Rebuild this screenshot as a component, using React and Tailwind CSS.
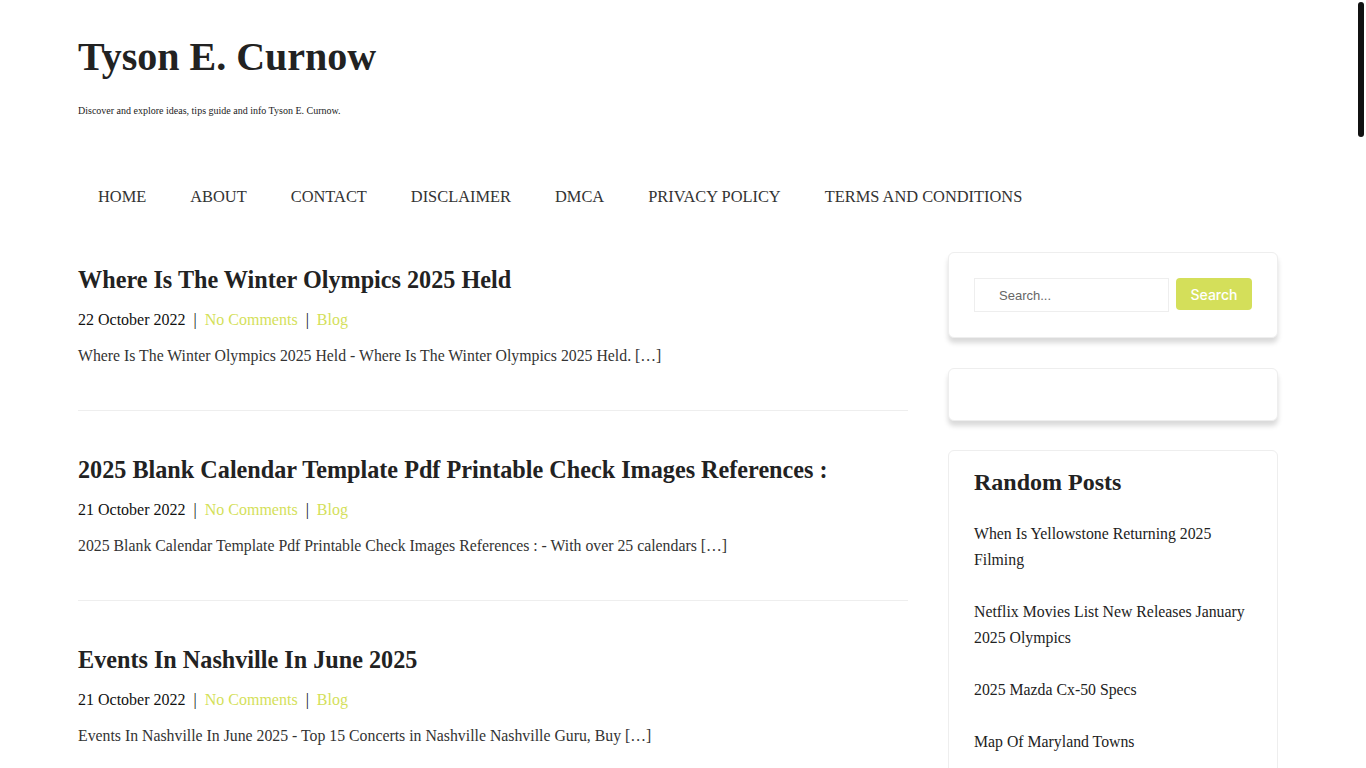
import React from "react";

const navItems = [
  "HOME",
  "ABOUT",
  "CONTACT",
  "DISCLAIMER",
  "DMCA",
  "PRIVACY POLICY",
  "TERMS AND CONDITIONS",
];

const posts = [
  {
    title: "Where Is The Winter Olympics 2025 Held",
    date: "22 October 2022",
    excerpt:
      "Where Is The Winter Olympics 2025 Held - Where Is The Winter Olympics 2025 Held. […]",
  },
  {
    title: "2025 Blank Calendar Template Pdf Printable Check Images References :",
    date: "21 October 2022",
    excerpt:
      "2025 Blank Calendar Template Pdf Printable Check Images References : - With over 25 calendars […]",
  },
  {
    title: "Events In Nashville In June 2025",
    date: "21 October 2022",
    excerpt:
      "Events In Nashville In June 2025 - Top 15 Concerts in Nashville Nashville Guru, Buy […]",
  },
];

const randomPosts = [
  "When Is Yellowstone Returning 2025 Filming",
  "Netflix Movies List New Releases January 2025 Olympics",
  "2025 Mazda Cx-50 Specs",
  "Map Of Maryland Towns",
];

const App = () => {
  return (
    <div className="relative h-screen overflow-hidden bg-white font-['Liberation_Serif',serif] text-[#333]">
      <div className="w-[calc(100%-10px)]">
        <div className="mx-auto w-[1200px]">
          <header className="pt-[30px]">
            <h1 className="text-[40px] leading-[54px] font-bold text-[#222]">
              Tyson E. Curnow
            </h1>
            <p className="mt-[19px] text-[10px] leading-[15px] text-[#222]">
              Discover and explore ideas, tips guide and info Tyson E. Curnow.
            </p>
          </header>

          <nav className="mt-[55px] flex gap-[4px]">
            {navItems.map((item) => (
              <a
                key={item}
                className="px-5 py-3 text-[16.4px] leading-6 text-[#333]"
              >
                {item}
              </a>
            ))}
          </nav>

          <div className="mt-[31px] flex gap-10">
            <main className="w-[830px] pt-[13px]">
              {posts.map((post, index) => (
                <article
                  key={index}
                  className={`border-b border-[#eee] pb-[42px] ${
                    index > 0 ? "pt-[44px]" : ""
                  }`}
                >
                  <h2 className="text-[24.2px] leading-[30px] font-bold text-[#222]">
                    {post.title}
                  </h2>
                  <div className="mt-[13px] text-[16px] leading-6 text-[#111]">
                    <span>{post.date}</span>
                    <span className="mx-2">|</span>
                    <a className="text-[#d4df5a]">No Comments</a>
                    <span className="mx-2">|</span>
                    <a className="text-[#d4df5a]">Blog</a>
                  </div>
                  <p className="mt-3 text-[15.8px] leading-6 text-[#333]">
                    {post.excerpt}
                  </p>
                </article>
              ))}
            </main>

            <aside className="w-[330px]">
              <div className="rounded-md border border-[#eee] bg-white p-[25px] shadow-[0_5px_5px_rgba(0,0,0,0.15)]">
                <form className="flex gap-[7px]">
                  <input
                    type="text"
                    placeholder="Search..."
                    className="h-[34px] w-[195px] border border-[#eee] pl-6 font-['Liberation_Sans',sans-serif] text-[13px] text-[#333] outline-none placeholder:text-[#666]"
                  />
                  <button
                    type="button"
                    className="h-[32px] w-[76px] rounded-[4px] bg-[#d4df5a] font-['Inter',sans-serif] text-[14px] font-medium text-white"
                  >
                    Search
                  </button>
                </form>
              </div>

              <div className="mt-[30px] h-[53px] rounded-md border border-[#eee] bg-white shadow-[0_5px_5px_rgba(0,0,0,0.15)]"></div>

              <div className="mt-[29px] rounded-md border border-[#eee] bg-white px-[25px] pt-4 pb-6">
                <h3 className="text-[24px] leading-[30px] font-bold text-[#222]">
                  Random Posts
                </h3>
                <ul className="mt-[24px]">
                  {randomPosts.map((item) => (
                    <li
                      key={item}
                      className="mb-[26px] text-[15.8px] leading-[26px] text-[#222]"
                    >
                      {item}
                    </li>
                  ))}
                </ul>
              </div>
            </aside>
          </div>
        </div>
      </div>

      <div className="absolute top-[2px] right-[2px] h-[135px] w-[6px] rounded-full bg-[#111]"></div>
    </div>
  );
};

export default App;
